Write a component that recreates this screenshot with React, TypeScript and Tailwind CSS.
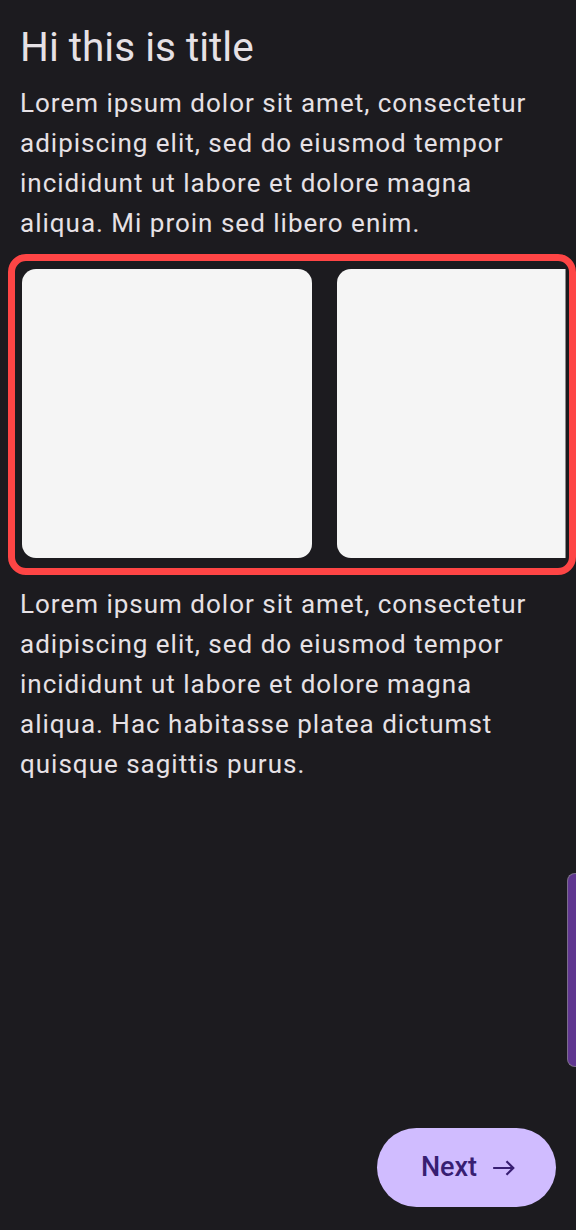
import React from "react";

const textColor = "text-[#e6e1e5]";

function EastIcon() {
  return (
    <svg width="26" height="26" viewBox="0 0 24 24" fill="currentColor" aria-hidden="true">
      <path d="M15 5l-1.41 1.41L18.17 11H2v2h16.17l-4.59 4.59L15 19l7-7-7-7z" />
    </svg>
  );
}

export default function App() {
  return (
    <div
      className="relative flex h-[1230px] w-full flex-col overflow-hidden bg-[#1c1b1f]"
      style={{ fontFamily: "Roboto, 'Noto Sans', sans-serif" }}
    >
      <h1 className={`mt-[21px] px-5 text-[40.5px] leading-[52px] font-normal ${textColor}`}>
        Hi this is title
      </h1>
      <p className={`mt-[10px] px-5 text-[26px] leading-[40px] tracking-[1px] ${textColor}`}>
        Lorem ipsum dolor sit amet, consectetur adipiscing elit, sed do eiusmod tempor incididunt ut
        labore et dolore magna aliqua. Mi proin sed libero enim.
      </p>

      <div className="mt-[11px] ml-2 rounded-[18px] border-[7px] border-[#fe4545] pt-2 pb-[10px] pl-[7px] pr-[3px]">
        <div className="flex gap-[25px] overflow-hidden border-r border-[#8c8c8c]">
          <div className="h-[289px] w-[290px] shrink-0 rounded-[14px] bg-[#f5f5f5]" />
          <div className="h-[289px] w-[290px] shrink-0 rounded-[14px] bg-[#f5f5f5]" />
        </div>
      </div>

      <p className={`mt-[9px] px-5 text-[26px] leading-[40px] tracking-[1px] ${textColor}`}>
        Lorem ipsum dolor sit amet, consectetur adipiscing elit, sed do eiusmod tempor incididunt ut
        labore et dolore magna aliqua. Hac habitasse platea dictumst quisque sagittis purus.
      </p>

      <div className="flex-1" />

      <button className="mr-5 mb-[23px] flex h-[79px] w-[179px] items-center justify-center gap-[14px] self-end rounded-full bg-[#d0bcff] pl-[5px] text-[27px] font-medium text-[#381e72]">
        <span>Next</span>
        <EastIcon />
      </button>

      <div className="absolute right-0 top-[873px] h-[194px] w-[9px] rounded-l-[8px] border border-r-0 border-[#7d6e8d] bg-[#5f3590]" />
    </div>
  );
}
